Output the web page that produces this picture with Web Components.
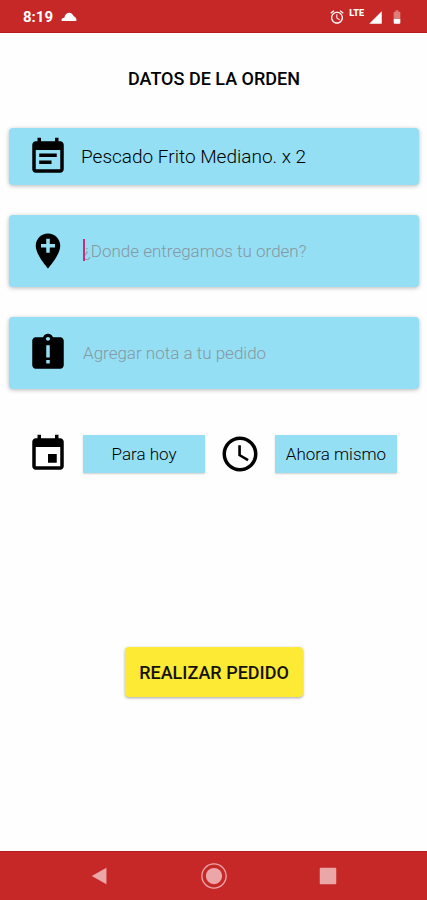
<!DOCTYPE html>
<html lang="es">
<head>
<meta charset="utf-8">
<meta name="viewport" content="width=device-width, initial-scale=1">
<title>Datos de la orden</title>
<style>
  body {
    margin: 0;
    background: #fefefe;
    color: #000;
    font-family: Roboto, "Liberation Sans", sans-serif;
  }
</style>
</head>
<body>
<order-screen></order-screen>

<script>
const icons = {
  note: '<path d="M17 10H7v2h10v-2zm2-7h-1V1h-2v2H8V1H6v2H5c-1.11 0-1.99.9-1.99 2L3 19c0 1.1.89 2 2 2h14c1.1 0 2-.9 2-2V5c0-1.1-.9-2-2-2zm0 16H5V8h14v11zm-5-5H7v2h7v-2z"/>',
  place: '<path d="M12 2C8.14 2 5 5.14 5 9c0 5.25 7 13 7 13s7-7.75 7-13c0-3.86-3.14-7-7-7zm4 8h-3v3h-2v-3H8V8h3V5h2v3h3v2z"/>',
  alert: '<path d="M19 3h-4.18C14.4 1.84 13.3 1 12 1s-2.4.84-2.82 2H5c-1.1 0-2 .9-2 2v14c0 1.1.9 2 2 2h14c1.1 0 2-.9 2-2V5c0-1.1-.9-2-2-2zm-6 15h-2v-2h2v2zm0-3.500h-2V7.500h2v7zM12 5c-.7 0-1.200-.5-1.200-1.100s.5-1.100 1.200-1.100 1.200.5 1.200 1.100S12.700 5 12 5z"/>',
  event: '<path d="M17 12h-5v5h5v-5zM16 1v2H8V1H6v2H5c-1.11 0-1.99.9-1.99 2L3 19c0 1.1.89 2 2 2h14c1.1 0 2-.9 2-2V5c0-1.1-.9-2-2-2h-1V1h-2zm3 18H5V8h14v11z"/>',
  clock: '<path d="M11.99 2C6.47 2 2 6.48 2 12s4.47 10 9.99 10C17.52 22 22 17.52 22 12S17.52 2 11.99 2zM12 20c-4.42 0-8-3.58-8-8s3.58-8 8-8 8 3.58 8 8-3.58 8-8 8zm.5-13H11v6l5.25 3.15.75-1.23-4.5-2.67z"/>',
  cloud: '<path d="M1 18c-1-3 1-5 4-5C6 8 10 5 14 6c3 1 4 3 5 5 3 1 5 4 4 7z"/>',
  alarm: '<path d="M22 5.72l-4.6-3.86-1.29 1.53 4.6 3.86L22 5.72zM7.88 3.39L6.6 1.86 2 5.71l1.29 1.53 4.59-3.85zM12.5 8H11v6l4.75 2.85.75-1.23-4-2.37V8zM12 4c-4.97 0-9 4.03-9 9s4.02 9 9 9c4.97 0 9-4.03 9-9s-4.03-9-9-9zm0 16c-3.87 0-7-3.13-7-7s3.13-7 7-7 7 3.13 7 7-3.13 7-7 7z"/>',
  signal: '<path d="M2 22h20V2z"/>',
  battery: '<path fill-opacity=".4" d="M17 5.33C17 4.6 16.4 4 15.67 4H14V2h-4v2H8.33C7.6 4 7 4.6 7 5.33V15h10V5.33z"/><path d="M7 15v5.67C7 21.4 7.6 22 8.33 22h7.33c.74 0 1.34-.6 1.34-1.33V15H7z"/>',
  back: '<path d="M19 3v18L3 12z"/>',
  home: '<circle cx="12" cy="12" r="7.5"/><circle cx="12" cy="12" r="11.2" fill="none" stroke="currentColor" stroke-width="1.2"/>',
  recent: '<rect x="3" y="3" width="18" height="18" rx="1"/>'
}

class MdIcon extends HTMLElement {
  constructor () {
    super()
    this.attachShadow({ mode: 'open' })
    this.shadowRoot.innerHTML = `
      <style>
        :host {
          display: block;
          flex: none;
          width: var(--icon-size, 42px);
          height: var(--icon-size, 42px);
        }
        svg {
          display: block;
          width: 100%;
          height: 100%;
          fill: currentColor;
        }
      </style>
      <svg viewBox="0 0 24 24" aria-hidden="true"></svg>
    `
  }

  connectedCallback () {
    this.shadowRoot.querySelector('svg').innerHTML = icons[this.getAttribute('name')]
  }
}

class StatusBar extends HTMLElement {
  constructor () {
    super()
    this.attachShadow({ mode: 'open' })
    this.shadowRoot.innerHTML = `
      <style>
        :host {
          display: flex;
          align-items: center;
          box-sizing: border-box;
          height: 33px;
          padding: 2px 22px 0 23px;
          border-bottom: 1px solid #c0181c;
          background: #c62828;
          color: #fff;
        }
        time {
          font-size: 15px;
          font-weight: 700;
        }
        .cloud {
          --icon-size: 16px;
          margin-left: 8px;
        }
        .right {
          display: flex;
          align-items: center;
          margin-left: auto;
        }
        .alarm {
          --icon-size: 16px;
        }
        .lte {
          align-self: flex-start;
          margin: 0 4px;
          font-size: 9px;
          line-height: 8px;
          font-weight: 900;
        }
        .signal {
          --icon-size: 15px;
          margin-right: 6px;
        }
        .battery {
          --icon-size: 16px;
        }
      </style>
      <time>8:19</time>
      <md-icon class="cloud" name="cloud"></md-icon>
      <div class="right">
        <md-icon class="alarm" name="alarm"></md-icon>
        <span class="lte">LTE</span>
        <md-icon class="signal" name="signal"></md-icon>
        <md-icon class="battery" name="battery"></md-icon>
      </div>
    `
  }
}

class OrderCard extends HTMLElement {
  constructor () {
    super()
    this.attachShadow({ mode: 'open' })
    this.shadowRoot.innerHTML = `
      <style>
        :host {
          display: flex;
          align-items: center;
          box-sizing: border-box;
          min-height: 57px;
          padding: 0 18px;
          border-radius: 4px;
          background: #95dff5;
          box-shadow: 0 1px 4px rgba(0, 0, 0, .28);
        }
        .body {
          flex: 1;
          min-width: 0;
          margin-left: 12px;
        }
      </style>
      <md-icon></md-icon>
      <div class="body"><slot></slot></div>
    `
    this.shadowRoot.querySelector('md-icon').setAttribute('name', this.getAttribute('icon'))
  }
}

class OrderField extends HTMLElement {
  constructor () {
    super()
    this.attachShadow({ mode: 'open' })
    this.shadowRoot.innerHTML = `
      <style>
        :host {
          display: block;
          position: relative;
          padding-left: 2px;
        }
        input {
          display: block;
          box-sizing: border-box;
          width: 100%;
          height: 72px;
          padding: 0;
          border: 0;
          outline: 0;
          background: none;
          color: inherit;
          font: 300 17px Roboto, "Liberation Sans", sans-serif;
          caret-color: #d81b78;
        }
        input::placeholder {
          color: #87979f;
          opacity: 1;
        }
        .caret {
          display: none;
          position: absolute;
          left: 2px;
          top: 24px;
          width: 2px;
          height: 22px;
          background: #d4287f;
        }
        :host([active]) .caret {
          display: block;
        }
      </style>
      <input type="text">
      <span class="caret"></span>
    `
    const input = this.shadowRoot.querySelector('input')
    input.placeholder = this.getAttribute('placeholder')
    input.setAttribute('aria-label', this.getAttribute('label'))
  }
}

class PickButton extends HTMLElement {
  constructor () {
    super()
    this.attachShadow({ mode: 'open' })
    this.shadowRoot.innerHTML = `
      <style>
        :host {
          display: flex;
          flex: 1;
          align-items: center;
          gap: 14px;
        }
        button {
          flex: 1;
          height: 38px;
          padding: 0;
          border: 0;
          border-radius: 1px;
          background: #95dff5;
          box-shadow: 0 1px 2px rgba(0, 0, 0, .2);
          color: #000;
          font: 300 17px Roboto, "Liberation Sans", sans-serif;
          white-space: nowrap;
        }
      </style>
      <md-icon></md-icon>
      <button type="button"><slot></slot></button>
    `
    this.shadowRoot.querySelector('md-icon').setAttribute('name', this.getAttribute('icon'))
  }
}

class NavBar extends HTMLElement {
  constructor () {
    super()
    this.attachShadow({ mode: 'open' })
    this.shadowRoot.innerHTML = `
      <style>
        :host {
          display: flex;
          align-items: center;
          justify-content: center;
          gap: 88px;
          box-sizing: border-box;
          height: 49px;
          border-top: 1px solid #b71c1c;
          background: #c62828;
        }
        button {
          display: block;
          padding: 0;
          border: 0;
          background: none;
          color: #eba6a8;
          --icon-size: 26px;
        }
        .small {
          padding: 0 2px;
          --icon-size: 22px;
        }
      </style>
      <button class="small" type="button" aria-label="Atrás"><md-icon name="back"></md-icon></button>
      <button type="button" aria-label="Inicio"><md-icon name="home"></md-icon></button>
      <button class="small" type="button" aria-label="Recientes"><md-icon name="recent"></md-icon></button>
    `
  }
}

class OrderScreen extends HTMLElement {
  constructor () {
    super()
    this.attachShadow({ mode: 'open' })
    this.shadowRoot.innerHTML = `
      <style>
        :host {
          display: flex;
          flex-direction: column;
          min-height: 100vh;
        }
        main {
          flex: 1;
          display: flex;
          flex-direction: column;
          padding: 34px 8px 24px 9px;
        }
        h1 {
          margin: 0 0 37px;
          font-size: 18px;
          line-height: 24px;
          font-weight: 500;
          text-align: center;
        }
        .cards {
          display: grid;
          gap: 30px;
        }
        .item {
          font-size: 19px;
          line-height: 24px;
          font-weight: 300;
        }
        .when {
          display: flex;
          gap: 14px;
          padding: 44px 22px 0 18px;
        }
        .submit {
          align-self: center;
          height: 50px;
          margin-top: 172px;
          padding: 0 14px;
          border: 0;
          border-radius: 4px;
          background: #fdea34;
          box-shadow: 0 1px 3px rgba(0, 0, 0, .35);
          color: #14120a;
          font: 500 18px Roboto, "Liberation Sans", sans-serif;
        }
      </style>
      <status-bar></status-bar>
      <main>
        <h1>DATOS DE LA ORDEN</h1>
        <div class="cards">
          <order-card icon="note"><span class="item">Pescado Frito Mediano. x 2</span></order-card>
          <order-card icon="place">
            <order-field active label="Dirección" placeholder="¿Donde entregamos tu orden?"></order-field>
          </order-card>
          <order-card icon="alert">
            <order-field label="Nota" placeholder="Agregar nota a tu pedido"></order-field>
          </order-card>
        </div>
        <div class="when">
          <pick-button icon="event">Para hoy</pick-button>
          <pick-button icon="clock">Ahora mismo</pick-button>
        </div>
        <button class="submit" type="button">REALIZAR PEDIDO</button>
      </main>
      <nav-bar></nav-bar>
    `
  }
}

window.customElements.define('order-screen', OrderScreen)
window.customElements.define('status-bar', StatusBar)
window.customElements.define('order-card', OrderCard)
window.customElements.define('order-field', OrderField)
window.customElements.define('pick-button', PickButton)
window.customElements.define('nav-bar', NavBar)
window.customElements.define('md-icon', MdIcon)
</script>
</body>
</html>
